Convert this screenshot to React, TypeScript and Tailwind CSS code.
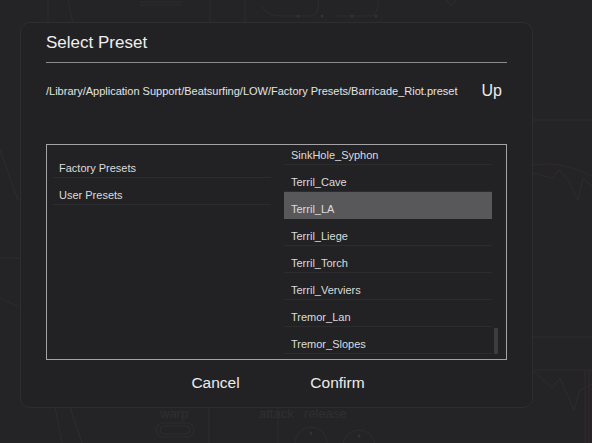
import React from 'react';

const FONT = "'Liberation Sans', Arial, sans-serif";

const folders = ['Factory Presets', 'User Presets'];

// tail of the factory preset list (the list is scrolled to its end)
const presets = [
  'SinkHole_Syphon', 'Terril_Cave', 'Terril_LA', 'Terril_Liege',
  'Terril_Torch', 'Terril_Verviers', 'Tremor_Lan', 'Tremor_Slopes',
];

const Backdrop = () => (
  <svg className="absolute inset-0" width="592" height="443" viewBox="0 0 592 443" fill="none">
    <g stroke="#2d2d2f" strokeWidth="1">
      <line x1="48" y1="0" x2="48" y2="24" />
      <line x1="68" y1="0" x2="73" y2="24" />
      <line x1="140" y1="2" x2="182" y2="2" />
      <line x1="140" y1="5" x2="182" y2="5" />
      <line x1="210" y1="0" x2="210" y2="24" />
      <line x1="245" y1="0" x2="245" y2="24" />
      <path d="M262 6 Q266 16 282 16 L314 16 Q320 10 318 0" />
      <path d="M336 16 L372 16 Q380 10 378 0" />
      <path d="M447 0 L451 6 L456 0" />
      <line x1="0" y1="150" x2="18" y2="200" />
      <line x1="0" y1="258" x2="20" y2="258" />
      <line x1="533" y1="120" x2="592" y2="120" />
      <line x1="533" y1="337" x2="592" y2="337" />
      <path d="M533 173 L552 178 L559 170 L568 180 L578 200 L583 178 L592 186" />
      <path d="M533 370 L552 388 L560 378 L574 410 L580 390 L592 384" />
      <line x1="55" y1="407" x2="62" y2="443" />
      <line x1="70" y1="407" x2="82" y2="443" />
      <line x1="209" y1="407" x2="209" y2="443" />
      <line x1="278" y1="407" x2="278" y2="443" />
      <rect x="156" y="423" width="38" height="14" rx="7" />
      <rect x="160" y="426" width="30" height="8" rx="4" />
      <circle cx="311" cy="443" r="16" />
      <circle cx="359" cy="446" r="16" />
    </g>
    <g stroke="#33282a" strokeWidth="1">
      <path d="M533 165 Q560 160 592 176" />
      <path d="M0 298 L18 306" />
      <line x1="535" y1="370" x2="592" y2="370" />
      <line x1="585" y1="370" x2="585" y2="443" />
      <line x1="589" y1="370" x2="589" y2="443" />
    </g>
    <g fill="#333335">
      <circle cx="298" cy="16" r="1.5" />
      <circle cx="322" cy="16" r="1.5" />
      <circle cx="352" cy="16" r="1.5" />
      <circle cx="376" cy="16" r="1.5" />
      <circle cx="311" cy="433" r="1.5" />
      <circle cx="359" cy="436" r="1.5" />
    </g>
    <g fill="#2f2f31" fontFamily={FONT} fontSize="13">
      <text x="160" y="418">warp</text>
      <text x="259" y="418">attack</text>
      <text x="304" y="418">release</text>
    </g>
  </svg>
);

export default function App() {
  return (
    <div className="relative w-[592px] h-[443px] overflow-hidden bg-[#242426]" style={{ fontFamily: FONT }}>
      <Backdrop />

      <div className="relative pt-[22px] pl-[20px]">
        <div className="w-[513px] h-[386px] rounded-[10px] border border-[#2e2e30] bg-[#222224] pl-[25px] pr-[25px] pt-[10px]">
          <h2 className="text-[17px] leading-[20px] text-[#efefef]">Select Preset</h2>
          <div className="mt-[9px] h-px bg-[#8c8c8e]" />

          <div className="mt-[18px] h-[20px] flex items-center justify-between pr-[5px]">
            <span className="text-[11px] text-[#e4e4e4] whitespace-nowrap">
              /Library/Application Support/Beatsurfing/LOW/Factory Presets/Barricade_Riot.preset
            </span>
            <button className="text-[16px] leading-[20px] text-[#ececec]">Up</button>
          </div>

          {/* browser box */}
          <div className="relative mt-[43px] h-[216px] border border-[#a4a4a6] flex overflow-hidden">
            <div className="w-[224px] pl-[6px] pt-[6px]">
              {folders.map(f => (
                <div key={f} className="h-[27px] border-b border-[#2c2c2e] flex items-end pb-[2px] pl-[6px]">
                  <span className="text-[11px] leading-[14px] text-[#dcdcdc]">{f}</span>
                </div>
              ))}
            </div>

            <div className="ml-[13px] w-[208px] -mt-[7px]">
              {presets.map(p => (
                <div
                  key={p}
                  className={`h-[27px] border-b flex items-end pb-[2px] pl-[7px] ${
                    p === 'Terril_LA' ? 'bg-[#58585a] border-[#58585a]' : 'border-[#2c2c2e]'
                  }`}
                >
                  <span className="text-[11px] leading-[14px] text-[#dcdcdc]">{p}</span>
                </div>
              ))}
            </div>

            {/* scrollbar thumb */}
            <div className="absolute right-[8px] bottom-[5px] w-[4px] h-[26px] bg-[#3c3c3e]" />
          </div>

          <div className="mt-[13px] flex justify-center">
            <button className="w-[122px] text-[15.5px] leading-[20px] text-[#ececec]">Cancel</button>
            <button className="w-[122px] text-[15.5px] leading-[20px] text-[#ececec]">Confirm</button>
          </div>
        </div>
      </div>
    </div>
  );
}
